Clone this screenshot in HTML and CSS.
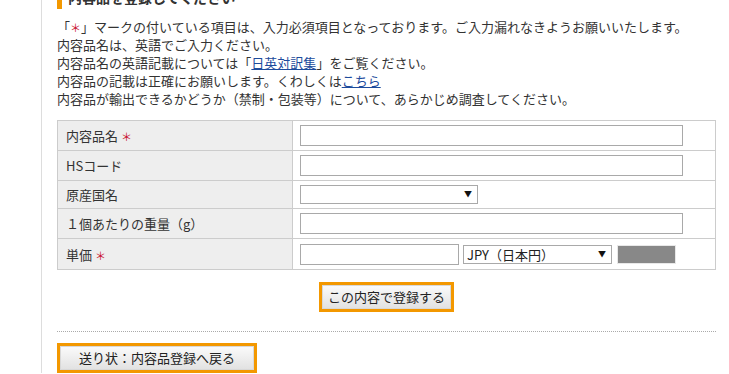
FILE: index.html
```html
<html lang="ja">
<head>
  <meta charset="utf-8">
  <link rel="stylesheet" href="styles.css">
</head>
<body>
  <div class="page">
    <h2 class="ttl">内容品を登録してください</h2>

    <div class="notes">
      <p>「<span class="req">＊</span>」マークの付いている項目は、入力必須項目となっております。ご入力漏れなきようお願いいたします。</p>
      <p>内容品名は、英語でご入力ください。</p>
      <p>内容品名の英語記載については「<a href="#">日英対訳集</a>」をご覧ください。</p>
      <p>内容品の記載は正確にお願いします。くわしくは<a href="#">こちら</a></p>
      <p>内容品が輸出できるかどうか（禁制・包装等）について、あらかじめ調査してください。</p>
    </div>

    <table class="form">
      <tr class="r1">
        <th>内容品名 <span class="req">＊</span></th>
        <td><input class="txt" type="text"></td>
      </tr>
      <tr class="r1">
        <th>HSコード</th>
        <td><input class="txt" type="text"></td>
      </tr>
      <tr class="r2">
        <th>原産国名</th>
        <td><span class="sel sel-country"><select></select></span></td>
      </tr>
      <tr class="r1">
        <th>１個あたりの重量（g）</th>
        <td><input class="txt" type="text"></td>
      </tr>
      <tr class="r3">
        <th>単価 <span class="req">＊</span></th>
        <td>
          <div class="price">
            <input class="txt txt-price" type="text">
            <span class="sel sel-cur"><select><option>JPY（日本円）</option></select></span>
            <span class="calc"></span>
          </div>
        </td>
      </tr>
    </table>

    <div class="submit">
      <span class="frame"><button class="btn btn-submit">この内容で登録する</button></span>
    </div>

    <div class="dots"></div>

    <span class="frame"><button class="btn btn-back">送り状：内容品登録へ戻る</button></span>
  </div>
</body>
</html>
```

FILE: styles.css
```css
body {
    margin: 0;
    font-family: "Noto Sans CJK JP", "Liberation Sans", sans-serif;
    font-size: 13px;
    color: #333;
    background: #fff;
}

.page {
    margin-left: 41px;
    border-left: 1px solid #ddd;
    padding: 0 12px 0 15px;
    width: 659px;
    min-height: 374px;
}

.ttl {
    margin: -11px 0 0 0;
    height: 20px;
    line-height: 16px;
    border-left: 5px solid #f39800;
    padding-left: 6px;
    font-size: 14px;
    font-weight: bold;
    color: #333;
}

.notes {
    margin-top: 9px;
}

.notes p {
    margin: 0;
    line-height: 18px;
    white-space: nowrap;
}

.notes a {
    color: #1d4b9c;
    text-decoration: underline;
}

.req {
    color: #c8102e;
    font-size: 11px;
}

.form {
    margin-top: 12px;
    width: 659px;
    border-collapse: collapse;
    border: 1px solid #ccc;
    font-size: 13px;
    color: #333;
}

.form th,
.form td {
    border: 1px solid #ccc;
    padding: 0;
}

.form th {
    width: 226px;
    background: #eeeeee;
    font-weight: normal;
    text-align: left;
    padding-left: 8px;
    color: #333;
}

.form td {
    padding-left: 7px;
}

.r1 { height: 30px; }
.r2 { height: 28px; }
.r3 { height: 31px; }

.txt {
    display: block;
    box-sizing: border-box;
    width: 383px;
    height: 21px;
    border: 1px solid #a9a9a9;
    padding: 0 3px;
    margin: 0;
    font-family: inherit;
    font-size: 13px;
}

.price {
    display: flex;
    align-items: center;
    gap: 4px;
}

.txt-price {
    width: 159px;
}

.sel {
    position: relative;
    display: inline-block;
    vertical-align: middle;
}

.sel select {
    -webkit-appearance: none;
    appearance: none;
    box-sizing: border-box;
    display: block;
    height: 19px;
    border: 1px solid #a9a9a9;
    border-radius: 0;
    background: #fff;
    margin: 0;
    padding: 0 0 0 3px;
    font-family: "Noto Sans CJK JP", "Liberation Sans", sans-serif;
    font-size: 13px;
    line-height: 17px;
    color: #222;
}

.sel::after {
    content: "▼";
    position: absolute;
    right: 6px;
    top: 4px;
    font-size: 8px;
    line-height: 10px;
    color: #111;
    pointer-events: none;
}

.sel-country select {
    width: 178px;
}

.sel-cur select {
    width: 149px;
}

.calc {
    display: inline-block;
    width: 59px;
    height: 19px;
    margin-left: 1px;
    background: #888;
    border: 1px solid #e8e8e8;
    box-sizing: border-box;
}

.submit {
    margin-top: 12px;
    text-align: center;
    height: 30px;
}

.frame {
    display: inline-block;
    border: 3px solid #f39800;
    vertical-align: top;
}

.btn {
    display: block;
    box-sizing: border-box;
    height: 24px;
    margin: 0;
    border: 1px solid #d8d8d8;
    background: linear-gradient(#fafafa, #e2e2e2);
    font-family: "Noto Sans CJK JP", "Liberation Sans", sans-serif;
    font-size: 13px;
    color: #222;
    padding: 0;
    line-height: 20px;
}

.btn-submit {
    width: 129px;
}

.btn-back {
    width: 194px;
}

.dots {
    margin-top: 19px;
    margin-bottom: 11px;
    border-top: 1px dotted #aaa;
}
```
